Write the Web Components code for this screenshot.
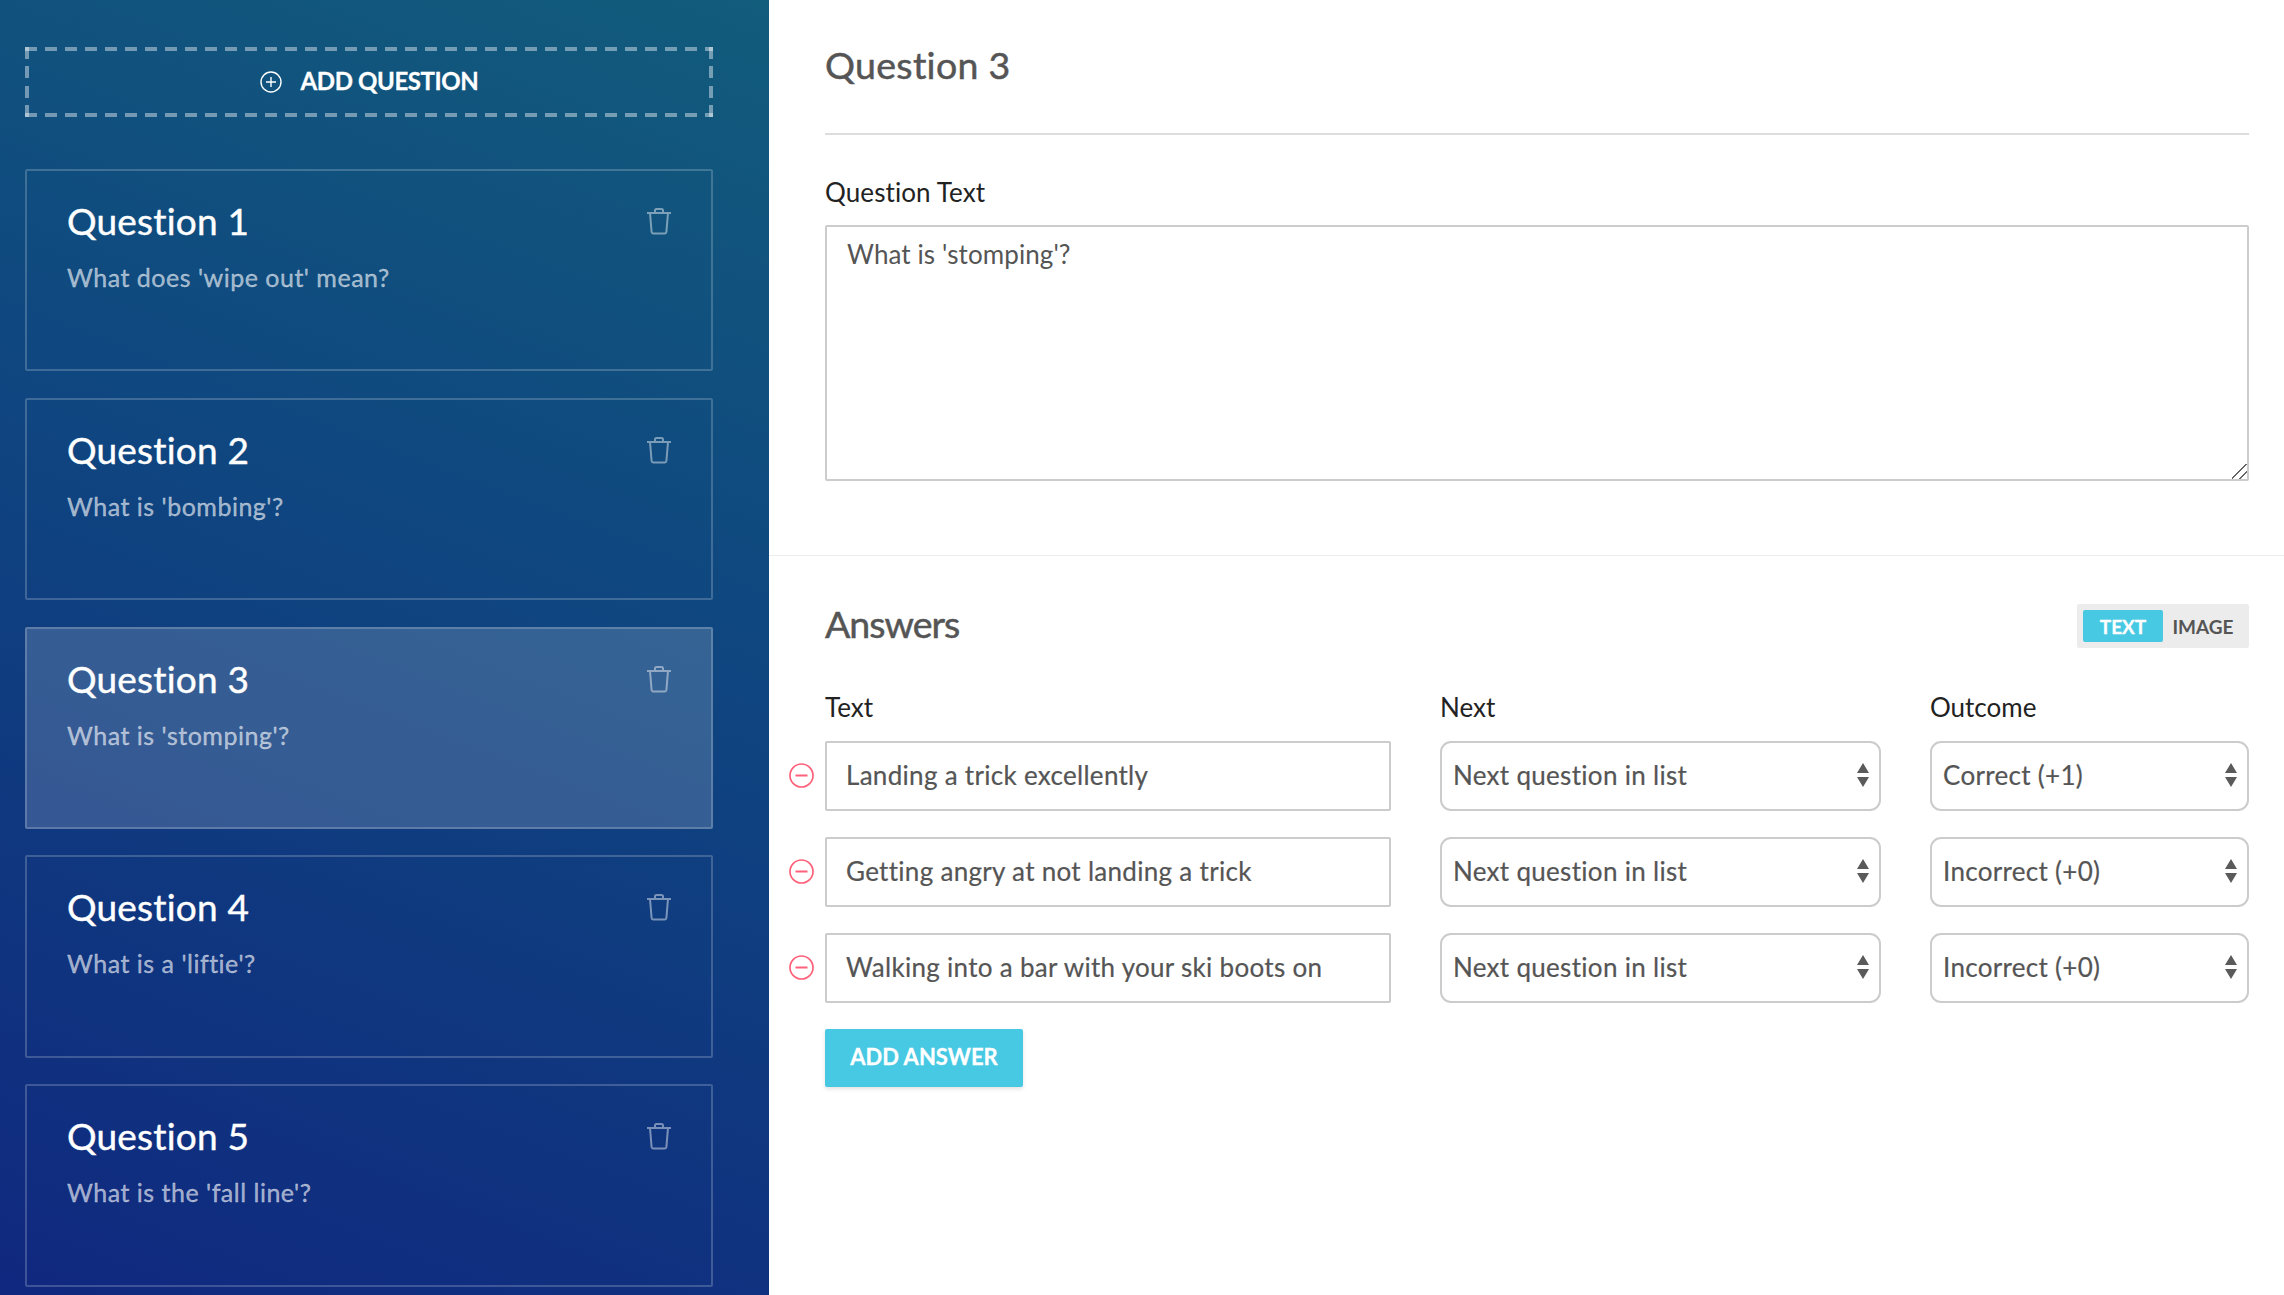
<!DOCTYPE html>
<html>
<head>
<meta charset="utf-8">
<title>Quiz editor</title>
<style>
  html, body { margin: 0; height: 100%; }
  body { font-family: "Lato", "Open Sans", sans-serif; overflow: hidden; }
  quiz-app { height: 1295px; }
</style>
</head>
<body>
<quiz-app>
  <quiz-sidebar slot="side">
    <add-question></add-question>
    <question-card name="Question 1" text="What does 'wipe out' mean?"></question-card>
    <question-card name="Question 2" text="What is 'bombing'?"></question-card>
    <question-card name="Question 3" text="What is 'stomping'?" active></question-card>
    <question-card name="Question 4" text="What is a 'liftie'?"></question-card>
    <question-card name="Question 5" text="What is the 'fall line'?"></question-card>
  </quiz-sidebar>
  <question-editor slot="main" name="Question 3" text="What is 'stomping'?">
    <answer-row text="Landing a trick excellently" next="Next question in list" outcome="Correct (+1)"></answer-row>
    <answer-row text="Getting angry at not landing a trick" next="Next question in list" outcome="Incorrect (+0)"></answer-row>
    <answer-row text="Walking into a bar with your ski boots on" next="Next question in list" outcome="Incorrect (+0)"></answer-row>
  </question-editor>
</quiz-app>

<script>
class QuizApp extends HTMLElement {
  constructor() {
    super();
    this.attachShadow({ mode: "open" });
    this.shadowRoot.innerHTML = `
      <style>
        :host { display: grid; grid-template-columns: 769px 1fr; width: 100%; overflow: hidden; }
      </style>
      <slot name="side"></slot>
      <slot name="main"></slot>
    `;
  }
}

class QuizSidebar extends HTMLElement {
  constructor() {
    super();
    this.attachShadow({ mode: "open" });
    this.shadowRoot.innerHTML = `
      <style>
        :host {
          display: flex;
          flex-direction: column;
          gap: 26.3px;
          box-sizing: border-box;
          height: 1295px;
          padding: 47px 56px 0 25px;
          background: linear-gradient(201deg, #125c7c 0%, #0f4680 42%, #10287f 100%);
        }
      </style>
      <slot></slot>
    `;
  }
}

class AddQuestion extends HTMLElement {
  constructor() {
    super();
    this.attachShadow({ mode: "open" });
    const dash = "rgba(255,255,255,.42)";
    const h = `repeating-linear-gradient(90deg, ${dash} 0 12px, transparent 12px 20px)`;
    const v = `repeating-linear-gradient(180deg, ${dash} 0 12px, transparent 12px 19.4px)`;
    this.shadowRoot.innerHTML = `
      <style>
        :host {
          display: flex;
          align-items: center;
          justify-content: center;
          gap: 19px;
          box-sizing: border-box;
          height: 70px;
          padding-bottom: 3px;
          margin-bottom: 25.7px;
          color: #fff;
          font-size: 24px;
          font-weight: 700;
          letter-spacing: -0.4px;
          -webkit-text-stroke: .3px #fff;
          background: ${h} 0 0 / 100% 4px no-repeat, ${h} 0 100% / 100% 4px no-repeat,
                      ${v} 0 0 / 4px 100% no-repeat, ${v} 100% 0 / 4px 100% no-repeat;
        }
        svg { width: 22px; height: 22px; margin-top: 3px; }
      </style>
      <svg viewBox="0 0 22 22" fill="none" stroke="#fff" stroke-width="1.4">
        <circle cx="11" cy="11" r="10"/><path d="M11 6v10M6 11h10"/>
      </svg>
      <span>ADD QUESTION</span>
    `;
  }
}

class QuestionCard extends HTMLElement {
  connectedCallback() {
    this.attachShadow({ mode: "open" });
    this.shadowRoot.innerHTML = `
      <style>
        :host {
          display: block;
          box-sizing: border-box;
          height: 202.5px;
          padding: 28px 39px 0 40px;
          border: 2px solid rgba(255,255,255,.2);
          border-radius: 2px;
          color: #fff;
        }
        :host([active]) { background: rgba(255,255,255,.16); }
        .top { display: flex; justify-content: space-between; align-items: center; height: 44px; }
        h3 { margin: 0; font-size: 37px; font-weight: 400; line-height: 44px; letter-spacing: .2px; -webkit-text-stroke: .4px #fff; }
        svg { width: 26px; height: 28px; }
        p { margin: 18px 0 0; font-size: 25px; line-height: 32px; color: rgba(255,255,255,.6); letter-spacing: .5px; -webkit-text-stroke: .3px rgba(255,255,255,.6); }
      </style>
      <div class="top">
        <h3>${this.getAttribute("name")}</h3>
        <svg viewBox="0 0 26 28" fill="none" stroke="rgba(255,255,255,.45)" stroke-width="2" stroke-linejoin="round">
          <path d="M1 6h24M4 6l1.600 19a1.600 1.600 0 0 0 1.600 1.400h11.600a1.600 1.600 0 0 0 1.600-1.400L22 6M9 6V3.500A1.500 1.500 0 0 1 10.500 2h5A1.500 1.500 0 0 1 17 3.500V6"/>
        </svg>
      </div>
      <p>${this.getAttribute("text")}</p>
    `;
  }
}

class ModeToggle extends HTMLElement {
  constructor() {
    super();
    this.attachShadow({ mode: "open" });
    this.shadowRoot.innerHTML = `
      <style>
        :host {
          display: flex;
          align-items: center;
          box-sizing: border-box;
          width: 172px;
          height: 44px;
          padding: 6px;
          background: #ececec;
          border-radius: 2px;
          font-size: 19px;
          font-weight: 700;
        }
        span { display: flex; align-items: center; justify-content: center; height: 32px; padding-top: 1px; box-sizing: border-box; }
        .on { width: 80px; background: #47c8e3; color: #fff; border-radius: 2px; -webkit-text-stroke: .3px #fff; }
        .off { flex: 1; color: #555; }
      </style>
      <span class="on">TEXT</span><span class="off">IMAGE</span>
    `;
  }
}

class AnswerRow extends HTMLElement {
  connectedCallback() {
    this.attachShadow({ mode: "open" });
    const arrows = `
      <svg viewBox="0 0 12 24" fill="#5a5a5a"><path d="M6 0l6 10H0zM6 24L0 14h12z"/></svg>`;
    this.shadowRoot.innerHTML = `
      <style>
        :host {
          display: grid;
          grid-template-columns: 56px 566px 490px 368px;
          align-items: center;
          height: 70px;
          margin-left: -56px;
          margin-bottom: 26px;
          color: #555;
          font-size: 26px;
        }
        .minus { width: 25px; height: 25px; margin: -1px 0 0 20px; }
        .box {
          box-sizing: border-box;
          display: flex;
          align-items: center;
          height: 70px;
          padding-bottom: 3px;
          border: 2.500px solid #ccc;
          background: #fff;
          letter-spacing: .3px;
          -webkit-text-stroke: .2px #555;
        }
        .input { padding-left: 19px; border-radius: 2px; }
        .select { justify-content: space-between; padding-left: 11px; padding-right: 10px; border-radius: 11px; }
        .next, .outcome { margin-left: 49px; }
        .box svg { width: 12px; height: 24px; }
      </style>
      <svg class="minus" viewBox="0 0 25 25" fill="none" stroke="#ff6079" stroke-width="1.700">
        <circle cx="12.500" cy="12.500" r="11.500"/><path d="M6.500 12.500h12" stroke-width="2"/>
      </svg>
      <div class="box input">${this.getAttribute("text")}</div>
      <div class="box select next"><span>${this.getAttribute("next")}</span>${arrows}</div>
      <div class="box select outcome"><span>${this.getAttribute("outcome")}</span>${arrows}</div>
    `;
  }
}

class QuestionEditor extends HTMLElement {
  connectedCallback() {
    this.attachShadow({ mode: "open" });
    this.shadowRoot.innerHTML = `
      <style>
        :host { display: block; height: 1295px; background: #fff; font-family: "Lato", "Open Sans", sans-serif; }
        .top { box-sizing: border-box; height: 556px; padding: 0 35px 0 56px; border-bottom: 1px solid #ececec; }
        .head { box-sizing: border-box; height: 135px; padding-top: 41px; border-bottom: 2px solid #ddd; }
        h2 { margin: 0; font-size: 37.500px; line-height: 48px; font-weight: 400; color: #555; letter-spacing: .3px; -webkit-text-stroke: .5px #555; }
        .bar h2 { margin-top: -4px; letter-spacing: -1px; }
        label { display: block; margin: 41px 0 17px; font-size: 26px; line-height: 32px; color: #222; letter-spacing: .1px; }
        textarea {
          display: block;
          box-sizing: border-box;
          width: 100%;
          height: 256px;
          padding: 9px 20px;
          border: 2px solid #ccc;
          border-radius: 2px;
          font: 26px/36px "Lato", sans-serif;
          color: #555;
          letter-spacing: .1px;
          outline: none;
        }
        textarea::-webkit-resizer {
          background: linear-gradient(135deg, transparent 0 9.500px, #666 9.500px 11.200px, transparent 11.200px 15px, #666 15px 16.700px, transparent 16.700px);
        }
        .answers { padding: 48px 35px 0 56px; }
        .bar { display: flex; justify-content: space-between; align-items: center; height: 44px; }
        .cols {
          display: grid;
          grid-template-columns: 566px 490px 368px;
          margin: 43px 0 18px;
          font-size: 26px;
          line-height: 32px;
          color: #222;
        }
        .cols span + span { margin-left: 49px; }
        button {
          display: block;
          width: 198px;
          height: 58px;
          padding-bottom: 4px;
          border: 0;
          border-radius: 2px;
          background: #47c8e3;
          color: #fff;
          font: 700 22px "Lato", sans-serif;
          -webkit-text-stroke: .3px #fff;
          box-shadow: 0 2px 4px rgba(0,0,0,.12);
        }
      </style>
      <div class="top">
        <div class="head"><h2>${this.getAttribute("name")}</h2></div>
        <label>Question Text</label>
        <textarea>${this.getAttribute("text")}</textarea>
      </div>
      <div class="answers">
        <div class="bar"><h2>Answers</h2><mode-toggle></mode-toggle></div>
        <div class="cols"><span>Text</span><span>Next</span><span>Outcome</span></div>
        <slot></slot>
        <button>ADD ANSWER</button>
      </div>
    `;
  }
}

customElements.define("quiz-app", QuizApp);
customElements.define("quiz-sidebar", QuizSidebar);
customElements.define("add-question", AddQuestion);
customElements.define("question-card", QuestionCard);
customElements.define("mode-toggle", ModeToggle);
customElements.define("answer-row", AnswerRow);
customElements.define("question-editor", QuestionEditor);
</script>
</body>
</html>
